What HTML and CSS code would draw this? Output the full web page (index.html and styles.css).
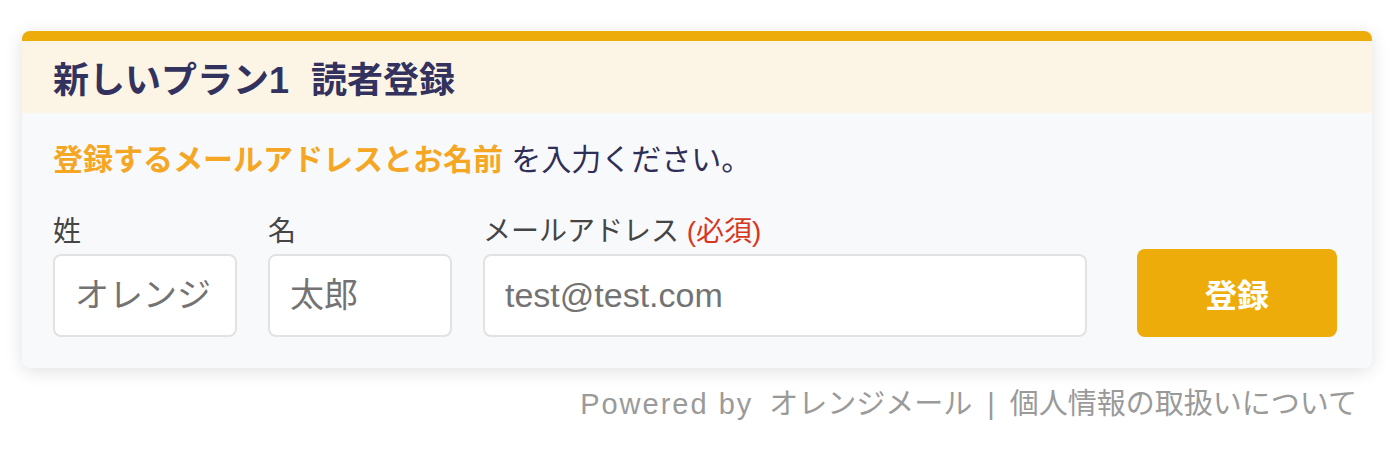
FILE: index.html
```html
<!DOCTYPE html>
<html lang="ja">
<head>
<meta charset="utf-8">
<title>新しいプラン1 読者登録</title>
<link rel="stylesheet" href="styles.css">
</head>
<body>
<div class="page">
  <div class="card">
    <div class="card-header">新しいプラン1<span class="title-gap"></span>読者登録</div>
    <div class="card-body">
      <p class="intro"><span class="intro-em">登録するメールアドレスとお名前</span> を入力ください。</p>
      <form class="form" onsubmit="return false;">
        <div class="field field-name">
          <label class="label">姓</label>
          <input class="input" type="text" placeholder="オレンジ">
        </div>
        <div class="field field-name">
          <label class="label">名</label>
          <input class="input" type="text" placeholder="太郎">
        </div>
        <div class="field field-email">
          <label class="label">メールアドレス <span class="required">(必須)</span></label>
          <input class="input" type="email" placeholder="test@test.com">
        </div>
        <button class="submit" type="submit">登録</button>
      </form>
    </div>
  </div>
  <div class="footer"><span class="latin">Powered by</span>オレンジメール<span class="sep">|</span>個人情報の取扱いについて</div>
</div>
</body>
</html>
```

FILE: styles.css
```css
* { box-sizing: border-box; }

html, body {
  margin: 0;
  padding: 0;
  background: #ffffff;
}

body {
  font-family: "Liberation Sans", "Noto Sans CJK JP", sans-serif;
  color: #333;
}

.page {
  padding: 31px 23px 0 22px;
}

.card {
  border-top: 10px solid #eeac0a;
  border-radius: 8px;
  overflow: hidden;
  box-shadow: 0 3px 18px rgba(0, 0, 0, 0.12);
  background: #f8f9fb;
}

.card-header {
  height: 72px;
  display: flex;
  align-items: center;
  padding: 0 31px;
  background: #fcf5e5;
  color: #33325e;
  font-size: 36px;
  font-weight: 700;
}

.title-gap {
  display: inline-block;
  width: 22px;
}

.card-body {
  padding: 25px 35px 31px 31px;
}

.intro {
  margin: 0;
  font-size: 30px;
  line-height: 44px;
  color: #2f2e56;
}

.intro-em {
  color: #f5a623;
  font-weight: 700;
}

.form {
  margin: 32px 0 0;
  display: flex;
  align-items: flex-end;
  gap: 31px;
}

.field {
  display: flex;
  flex-direction: column;
  gap: 4px;
}

.field-name { width: 184px; }

.field-email { flex: 1; }

.label {
  font-size: 28px;
  line-height: 36px;
  color: #454545;
}

.required { color: #d8361e; }

.input {
  width: 100%;
  height: 83px;
  border: 2px solid #e2e2e2;
  border-radius: 8px;
  background: #ffffff;
  padding: 0 10px 0 20px;
  font-family: "Liberation Sans", "Noto Sans CJK JP", sans-serif;
  font-size: 34px;
  color: #333;
  outline: none;
}

.input::placeholder { color: #737373; }

.submit {
  width: 200px;
  height: 88px;
  margin-left: 19px;
  border: none;
  border-radius: 8px;
  background: #eeac0a;
  color: #ffffff;
  font-family: "Liberation Sans", "Noto Sans CJK JP", sans-serif;
  font-size: 32px;
  font-weight: 700;
  cursor: pointer;
}

.footer {
  margin-top: 16px;
  padding-right: 15px;
  text-align: right;
  font-size: 29px;
  line-height: 40px;
  color: #9a9a9a;
}

.latin {
  display: inline-block;
  letter-spacing: 2px;
  margin-right: 16px;
}

.sep {
  display: inline-block;
  margin: 0 15px;
}
```
